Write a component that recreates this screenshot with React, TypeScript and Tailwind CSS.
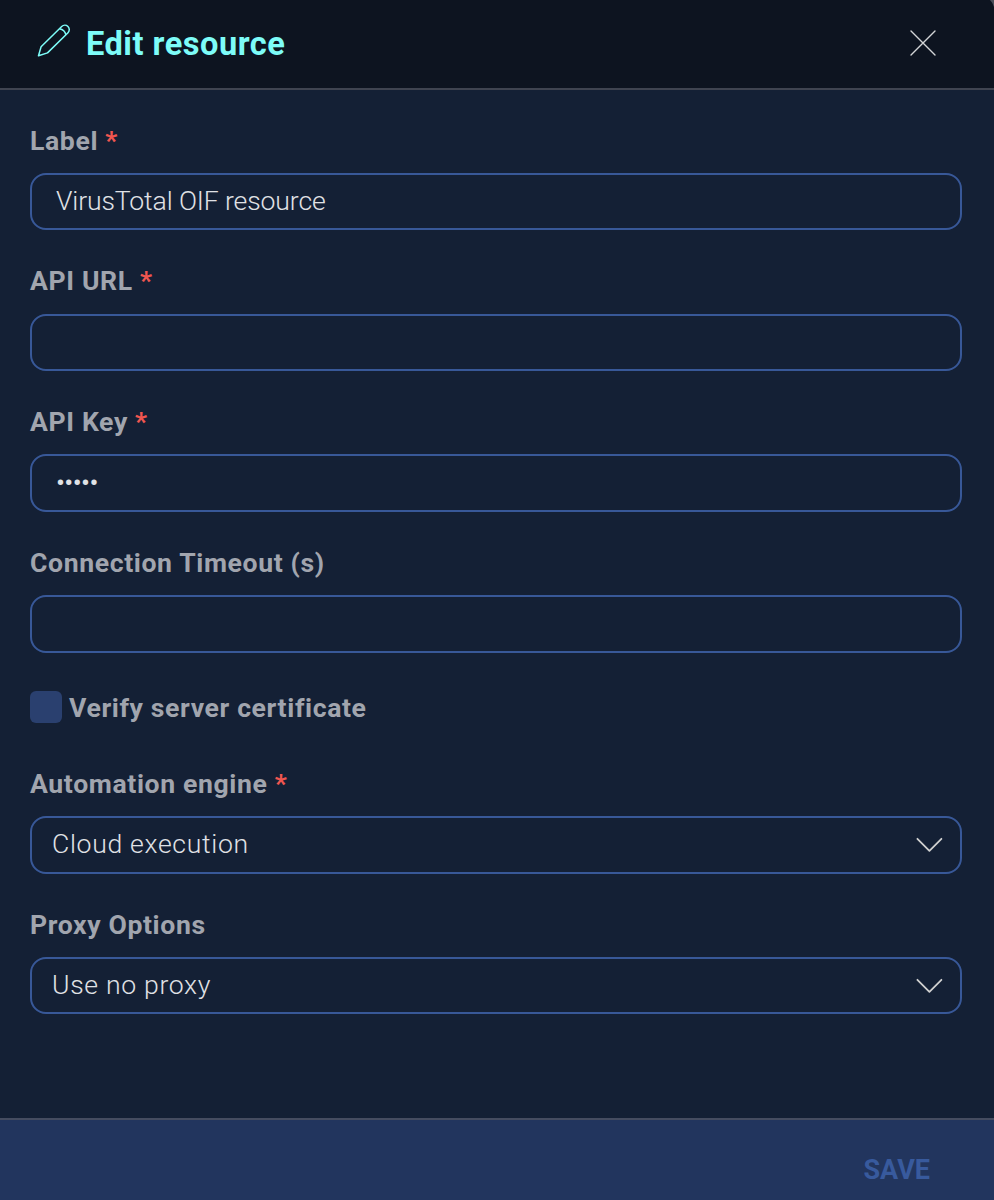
import type { ReactNode } from "react";

function Label({ children, required }: { children: ReactNode; required?: boolean }) {
  return (
    <span className="mb-[17px] block h-[30px] text-[26.6px] leading-[30px] font-bold tracking-[0.62px] whitespace-nowrap text-[#a1a5ae]">
      {children}
      {required && <span className="text-[#f05650]"> *</span>}
    </span>
  );
}

function Chevron() {
  return (
    <svg className="h-[16px] w-[28px]" viewBox="0 0 28 16" fill="none" stroke="#d0d0d0" strokeWidth="1.8" strokeLinecap="round" strokeLinejoin="round">
      <path d="M2.4 1.8 14.4 13.8 26.4 1.8" />
    </svg>
  );
}

const box = "flex w-[932px] items-center rounded-[16px] border-2 border-[#385898] text-[26.6px] leading-[30px] font-light text-[#e0e2e6]";

export default function App() {
  return (
    <div className="flex h-[1200px] w-[994px] flex-col overflow-hidden bg-[#142035] font-['Roboto',sans-serif]">
      <header className="relative flex h-[90px] shrink-0 items-center border-b-2 border-[#3f4450] bg-[#0d1420] pr-[57px] pl-[37px]">
        <svg className="mb-[6px] h-[34px] w-[34px]" viewBox="0 0 34 34" fill="none" stroke="#7dfcf8" strokeWidth="1.5" strokeLinejoin="round">
          <path d="M1.5 31.8 4.1 22.8 24.7 2.5A4.3 4.3 0 0 1 31 8.7L10.5 28.9Z" />
          <path d="M22.5 4.7Q27.8 5.6 28.9 10.8" />
        </svg>
        <h1 className="ml-[15px] text-[32.6px] leading-[38px] font-bold tracking-[0.5px] text-[#7dfcf8]">Edit resource</h1>
        <svg className="mb-[2px] ml-auto h-[28px] w-[28px]" viewBox="0 0 28 28" fill="none" stroke="#d3d5d6" strokeWidth="1.4" strokeLinecap="round">
          <path d="M2 2 26 26M26 2 2 26" />
        </svg>
        <svg className="absolute top-0 right-0 h-[7px] w-[4px]" viewBox="0 0 4 7" fill="none">
          <path d="M0 0H4V7Q3 3 0 0Z" fill="#4a4f5a" />
        </svg>
      </header>
      <main className="flex flex-1 flex-col items-start px-[30px] pt-[36px]">
        <Label required>Label</Label>
        <div className={`${box} mb-[36px] h-[57px] px-[24px]`}>
          <span className="mb-px tracking-[-0.12px]">VirusTotal OIF resource</span>
        </div>
        <div className="mb-px">
          <Label required>API URL</Label>
        </div>
        <div className={`${box} mb-[36px] h-[57px]`} />
        <Label required>API Key</Label>
        <div className={`${box} mb-[36px] h-[58px] px-[24px]`}>
          <span className="font-normal tracking-[-0.6px]">•••••</span>
        </div>
        <Label>Connection Timeout (s)</Label>
        <div className={`${box} mb-[38px] h-[58px]`} />
        <div className="mb-[46px] flex h-[32px] items-center gap-[7px]">
          <span className="h-[32px] w-[32px] rounded-[6px] bg-[#2a406f]" />
          <span className="mt-[2px] text-[26.6px] leading-[30px] font-bold tracking-[0.62px] text-[#a1a5ae]">Verify server certificate</span>
        </div>
        <Label required>Automation engine</Label>
        <div className={`${box} mb-[36px] h-[58px] justify-between pr-[17px] pl-[20px]`}>
          <span className="mb-[2px] tracking-[0.68px]">Cloud execution</span>
          <Chevron />
        </div>
        <Label>Proxy Options</Label>
        <div className={`${box} h-[57px] justify-between pr-[17px] pl-[20px]`}>
          <span className="mb-px tracking-[0.68px]">Use no proxy</span>
          <Chevron />
        </div>
      </main>
      <footer className="flex h-[82px] shrink-0 justify-end border-t-2 border-[#454c60] bg-[#22355e] pt-[35px] pr-[64px]">
        <span className="text-[27px] leading-[30px] font-bold text-[#385a9d]">SAVE</span>
      </footer>
    </div>
  );
}
